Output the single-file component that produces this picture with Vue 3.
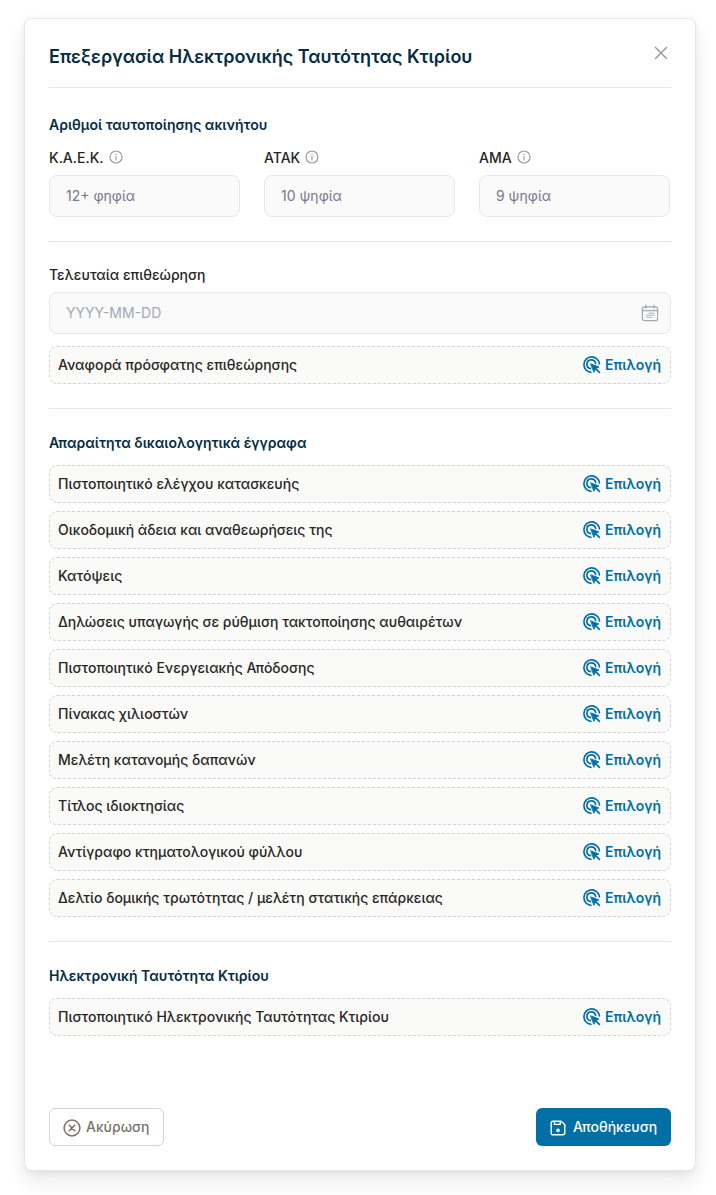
<script setup>
const ids = [
  { label: 'Κ.Α.Ε.Κ.', placeholder: '12+ φηφία' },
  { label: 'ΑΤΑΚ', placeholder: '10 ψηφία' },
  { label: 'ΑΜΑ', placeholder: '9 ψηφία' }
]
const docs = [
  'Πιστοποιητικό ελέγχου κατασκευής',
  'Οικοδομική άδεια και αναθεωρήσεις της',
  'Κατόψεις',
  'Δηλώσεις υπαγωγής σε ρύθμιση τακτοποίησης αυθαιρέτων',
  'Πιστοποιητικό Ενεργειακής Απόδοσης',
  'Πίνακας χιλιοστών',
  'Μελέτη κατανομής δαπανών',
  'Τίτλος ιδιοκτησίας',
  'Αντίγραφο κτηματολογικού φύλλου',
  'Δελτίο δομικής τρωτότητας / μελέτη στατικής επάρκειας'
]
</script>

<template>
  <div class="page">
    <section class="card">
      <header class="head">
        <h1>Επεξεργασία Ηλεκτρονικής Ταυτότητας Κτιρίου</h1>
        <svg class="close" viewBox="0 0 14 14" width="14" height="14" fill="none" stroke="#9b9b9b" stroke-width="1.5" stroke-linecap="round">
          <path d="M1.5 1.5l11 11M12.5 1.5l-11 11" />
        </svg>
      </header>

      <div class="block first">
        <h2>Αριθμοί ταυτοποίησης ακινήτου</h2>
        <div class="ids">
          <div v-for="f in ids" :key="f.label" class="field">
            <div class="label">
              <span>{{ f.label }}</span>
              <svg viewBox="0 0 14 14" width="14" height="14" fill="none" stroke="#9c9c9c" stroke-width="1.2">
                <circle cx="7" cy="7" r="6" />
                <path d="M7 6.4v3.4" stroke-linecap="round" />
                <circle cx="7" cy="4.4" r=".7" fill="#9c9c9c" stroke="none" />
              </svg>
            </div>
            <div class="input">{{ f.placeholder }}</div>
          </div>
        </div>
      </div>

      <div class="block second">
        <div class="label">Τελευταία επιθεώρηση</div>
        <div class="input date">
          <span>YYYY-MM-DD</span>
          <svg viewBox="0 0 18 18" width="18" height="18" fill="none" stroke="#a3a8b3" stroke-width="1.2">
            <rect x="1.4" y="2.8" width="15.2" height="13.8" rx="2.2" />
            <path d="M1.4 6.6h15.2M5 1.2v3M13 1.2v3" stroke-linecap="round" />
            <path d="M7.5 9.2h6M5 11.2h8.5M5 13.4h6" stroke-width=".9" />
          </svg>
        </div>
        <div class="row mt12">
          <span>Αναφορά πρόσφατης επιθεώρησης</span>
          <span class="pick">
            <svg viewBox="0 0 16 16" width="18" height="18" fill="none" stroke="#006fa6" stroke-width="1.5" stroke-linecap="round">
              <path d="M7 14.6A6.9 6.9 0 1 1 14.6 7" />
              <path d="M6.6 11.2A3.9 3.9 0 1 1 11.2 6.6" />
              <path d="M7 7l7.2 2.7-3 1.4-1.4 3.1z" fill="#006fa6" stroke-width=".8" stroke-linejoin="round" />
              <path d="M11.4 11.4l3.2 3.2" stroke-width="1.5" />
            </svg>
            Επιλογή
          </span>
        </div>
      </div>

      <div class="block">
        <h2>Απαραίτητα δικαιολογητικά έγγραφα</h2>
        <div class="rows">
          <div v-for="d in docs" :key="d" class="row">
            <span>{{ d }}</span>
            <span class="pick">
              <svg viewBox="0 0 16 16" width="18" height="18" fill="none" stroke="#006fa6" stroke-width="1.5" stroke-linecap="round">
                <path d="M7 14.6A6.9 6.9 0 1 1 14.6 7" />
                <path d="M6.6 11.2A3.9 3.9 0 1 1 11.2 6.6" />
                <path d="M7 7l7.2 2.7-3 1.4-1.4 3.1z" fill="#006fa6" stroke-width=".8" stroke-linejoin="round" />
                <path d="M11.4 11.4l3.2 3.2" stroke-width="1.5" />
              </svg>
              Επιλογή
            </span>
          </div>
        </div>
      </div>

      <div class="block last">
        <h2>Ηλεκτρονική Ταυτότητα Κτιρίου</h2>
        <div class="row">
          <span>Πιστοποιητικό Ηλεκτρονικής Ταυτότητας Κτιρίου</span>
          <span class="pick">
            <svg viewBox="0 0 16 16" width="18" height="18" fill="none" stroke="#006fa6" stroke-width="1.5" stroke-linecap="round">
              <path d="M7 14.6A6.9 6.9 0 1 1 14.6 7" />
              <path d="M6.6 11.2A3.9 3.9 0 1 1 11.2 6.6" />
              <path d="M7 7l7.2 2.7-3 1.4-1.4 3.1z" fill="#006fa6" stroke-width=".8" stroke-linejoin="round" />
              <path d="M11.4 11.4l3.2 3.2" stroke-width="1.5" />
            </svg>
            Επιλογή
          </span>
        </div>
      </div>

      <footer class="foot">
        <button class="btn ghost" type="button">
          <svg viewBox="0 0 18 18" width="18" height="18" fill="none" stroke="#78716c" stroke-width="1.5" stroke-linecap="round">
            <circle cx="9" cy="9" r="7.9" />
            <path d="M6.2 6.2l5.6 5.6M11.8 6.2l-5.6 5.6" />
          </svg>
          Ακύρωση
        </button>
        <button class="btn primary" type="button">
          <svg viewBox="0 0 16 16" width="16" height="16" fill="none" stroke="#fff" stroke-width="1.4" stroke-linejoin="round">
            <path d="M2.8 1.2h8.2l3.8 3.4v8.2a2 2 0 0 1-2 2H2.8a1.6 1.6 0 0 1-1.6-1.6V2.8a1.6 1.6 0 0 1 1.6-1.6z" />
            <path d="M4.4 1.4v3h5.8v-3" />
            <circle cx="8" cy="10.4" r="1.8" fill="#fff" stroke="none" />
          </svg>
          Αποθήκευση
        </button>
      </footer>
    </section>
  </div>
</template>

<style scoped>
.page {
  width: 716px;
  height: 1195px;
  padding: 18px 20px 24px 24px;
  box-sizing: border-box;
  font-family: Inter, "Noto Sans", sans-serif;
  background: #fff;
}
.card {
  box-sizing: border-box;
  height: 1153px;
  padding: 0 24px;
  background: #fff;
  border: 1px solid #e7e7e7;
  border-radius: 8px;
  box-shadow: 0 10px 20px rgba(0, 0, 0, .09), 0 2px 6px rgba(0, 0, 0, .05);
  display: flex;
  flex-direction: column;
}
.head {
  height: 69px;
  box-sizing: border-box;
  border-bottom: 1px solid #e7e7e7;
  display: flex;
  align-items: center;
  justify-content: space-between;
  padding-top: 8px;
}
h1 {
  margin: 0;
  font-size: 18px;
  line-height: 24px;
  font-weight: 600;
  color: #062c43;
}
.close { margin: -8px 3px 0 0; flex-shrink: 0; }
h2 {
  margin: 0 0 12px;
  font-size: 14px;
  line-height: 20px;
  font-weight: 600;
  color: #062c43;
}
.block {
  padding: 24px 0;
  border-bottom: 1px solid #e7e7e7;
}
.block.first { padding-top: 27px; }
.block.second { padding-top: 22px; }
.block.last { border-bottom: 0; }
.ids {
  display: grid;
  grid-template-columns: repeat(3, 191px);
  gap: 24px;
}
.label {
  display: flex;
  align-items: center;
  gap: 5px;
  height: 20px;
  margin-bottom: 8px;
  font-size: 14px;
  font-weight: 500;
  color: #292524;
}
.input {
  box-sizing: border-box;
  height: 42px;
  padding: 0 16px 2px;
  border: 1px solid #e7e7e7;
  border-radius: 8px;
  background: #fafafa;
  font-size: 14px;
  color: #78788c;
  display: flex;
  align-items: center;
}
.date {
  justify-content: space-between;
  color: #a3a8b3;
  padding-right: 11px;
}
.date svg { margin-top: 2px; }
.row {
  box-sizing: border-box;
  height: 38px;
  padding: 0 9px 2px 8px;
  border: 1px dashed #d4d4d4;
  border-radius: 8px;
  background: #fafaf9;
  display: flex;
  align-items: center;
  justify-content: space-between;
  font-size: 14px;
  font-weight: 500;
  color: #292524;
}
.mt12 { margin-top: 12px; }
.rows {
  display: flex;
  flex-direction: column;
  gap: 8px;
}
.pick {
  display: flex;
  align-items: center;
  gap: 4px;
  font-weight: 600;
  color: #006fa6;
}
.pick svg { flex-shrink: 0; margin-top: 2px; }
.foot {
  margin-top: auto;
  padding-bottom: 24px;
  display: flex;
  justify-content: space-between;
}
.btn {
  height: 38px;
  box-sizing: border-box;
  border-radius: 6px;
  display: flex;
  align-items: center;
  gap: 5px;
  font-family: inherit;
  font-size: 14px;
  font-weight: 500;
  white-space: nowrap;
  padding-bottom: 2px;
}
.btn svg { flex-shrink: 0; margin-top: 2px; }
.ghost {
  width: 115px;
  padding-left: 13px;
  padding-right: 13px;
  border: 1px solid #d6d3d1;
  background: #fff;
  color: #78716c;
}
.primary {
  width: 135px;
  padding-left: 14px;
  padding-right: 14px;
  gap: 7px;
  border: 0;
  background: #006fa6;
  color: #fff;
}
</style>
